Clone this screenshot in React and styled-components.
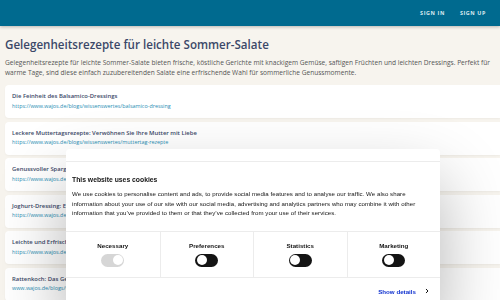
import React from 'react';
import styled, { createGlobalStyle } from 'styled-components';

const GlobalStyle = createGlobalStyle`
  html, body {
    margin: 0;
    padding: 0;
    height: 100%;
    overflow: hidden;
    background: #f7f4ee;
    font-family: "Open Sans", "Noto Sans", sans-serif;
  }
`;

const TopBar = styled.header`
  height: 26px;
  background: #006a8f;
  box-shadow: 0 1px 3px rgba(0, 0, 0, 0.25);
  display: flex;
  align-items: center;
  justify-content: flex-end;
  gap: 15px;
  padding-right: 14px;
`;

const NavLink = styled.a`
  font-size: 5.4px;
  font-weight: 700;
  letter-spacing: 0.6px;
  color: #d9e9f0;
  text-transform: uppercase;
  text-decoration: none;
`;

const Main = styled.main`
  padding: 11px 0 0 5px;
`;

const Title = styled.h1`
  margin: 0;
  font-size: 11.6px;
  line-height: 16px;
  font-weight: 600;
  color: #3b4868;
`;

const Intro = styled.p`
  margin: 5px 2px 7px 0;
  font-size: 6.6px;
  line-height: 10px;
  color: #555;
`;

const List = styled.div`
  display: flex;
  flex-direction: column;
  gap: 3.5px;
`;

const Card = styled.div`
  background: #fff;
  border-radius: 4px 0 0 4px;
  padding: 7px 7px;
  box-shadow: 0 1px 2px rgba(0, 0, 0, 0.04);
`;

const CardTitle = styled.div`
  font-size: 5.9px;
  line-height: 9.5px;
  font-weight: 600;
  color: #3b4868;
  white-space: nowrap;
`;

const CardUrl = styled.div`
  font-size: 5.4px;
  line-height: 9.5px;
  color: #2a8db3;
  white-space: nowrap;
`;

const Dialog = styled.div`
  position: fixed;
  left: 66px;
  top: 149px;
  width: 374px;
  background: #fff;
  border-radius: 4px;
  box-shadow: 0 32px 68px rgba(0, 0, 0, 0.3);
  font-family: "Liberation Sans", Arial, sans-serif;
  color: #141414;
`;

const DialogHead = styled.div`
  height: 12px;
  border-bottom: 1px solid #ececec;
`;

const DialogBody = styled.div`
  padding: 13px 14px 13px 6px;
`;

const DialogTitle = styled.h2`
  margin: 0 0 4px;
  font-size: 6.8px;
  line-height: 10px;
  font-weight: 700;
`;

const DialogText = styled.p`
  margin: 0;
  font-size: 6.1px;
  line-height: 9.6px;
  letter-spacing: 0.05px;
`;

const Toggles = styled.div`
  display: grid;
  grid-template-columns: repeat(4, 1fr);
  border-top: 1px solid #ececec;
  border-bottom: 1px solid #ececec;
`;

const ToggleCell = styled.div`
  height: 45px;
  display: flex;
  flex-direction: column;
  align-items: center;
  justify-content: center;
  gap: 5px;
  border-left: ${(p) => (p.$first ? 'none' : '1px solid #ececec')};
`;

const ToggleLabel = styled.span`
  font-size: 6.2px;
  font-weight: 700;
`;

const Switch = styled.span`
  position: relative;
  width: 23px;
  height: 13px;
  border-radius: 7px;
  background: ${(p) => (p.$disabled ? '#d6d6d6' : '#141414')};
  &::after {
    content: '';
    position: absolute;
    top: 1.5px;
    left: ${(p) => (p.$on ? '11.5px' : '1.5px')};
    width: 10px;
    height: 10px;
    border-radius: 50%;
    background: #fff;
  }
`;

const Footer = styled.div`
  display: flex;
  justify-content: flex-end;
  align-items: center;
  gap: 8px;
  padding: 10px 10px 14px;
`;

const DetailsLink = styled.a`
  font-size: 6.2px;
  font-weight: 700;
  color: #1032cf;
  text-decoration: none;
`;

const Chevron = () => (
  <svg width="6" height="6" viewBox="0 0 24 24" fill="none" stroke="#141414" strokeWidth="4" strokeLinecap="round" strokeLinejoin="round">
    <path d="M9 5l7 7-7 7" />
  </svg>
);

const posts = [
  ['Die Feinheit des Balsamico-Dressings', 'https://www.wajos.de/blogs/wissenswertes/balsamico-dressing'],
  ['Leckere Muttertagsrezepte: Verwöhnen Sie Ihre Mutter mit Liebe', 'https://www.wajos.de/blogs/wissenswertes/muttertag-rezepte'],
  ['Genussvoller Spargelsalat mit Erdbeeren und Balsamico', 'https://www.wajos.de/blogs/wissenswertes/spargelsalat'],
  ['Joghurt-Dressing: Ein cremischer Klassiker für Salate', 'https://www.wajos.de/blogs/wissenswertes/joghurt-dressing'],
  ['Leichte und Erfrischende Sommerrezepte', 'https://www.wajos.de/blogs/wissenswertes/sommerrezepte'],
  ['Rattenkoch: Das Geheimnis der französischen Küche', 'www.wajos.de/blogs/wissenswertes/ratatouille'],
];

const consents = [
  { label: 'Necessary', disabled: true, on: true },
  { label: 'Preferences' },
  { label: 'Statistics' },
  { label: 'Marketing' },
];

export default function App() {
  return (
    <>
      <GlobalStyle />
      <TopBar>
        <NavLink>Sign in</NavLink>
        <NavLink>Sign up</NavLink>
      </TopBar>
      <Main>
        <Title>Gelegenheitsrezepte für leichte Sommer-Salate</Title>
        <Intro>
          Gelegenheitsrezepte für leichte Sommer-Salate bieten frische, köstliche Gerichte mit knackigem Gemüse, saftigen
          Früchten und leichten Dressings. Perfekt für warme Tage, sind diese einfach zuzubereitenden Salate eine
          erfrischende Wahl für sommerliche Genussmomente.
        </Intro>
        <List>
          {posts.map(([title, url]) => (
            <Card key={url}>
              <CardTitle>{title}</CardTitle>
              <CardUrl>{url}</CardUrl>
            </Card>
          ))}
        </List>
      </Main>
      <Dialog>
        <DialogHead />
        <DialogBody>
          <DialogTitle>This website uses cookies</DialogTitle>
          <DialogText>
            We use cookies to personalise content and ads, to provide social media features and to analyse our traffic. We
            also share information about your use of our site with our social media, advertising and analytics partners who
            may combine it with other information that you’ve provided to them or that they’ve collected from your use of
            their services.
          </DialogText>
        </DialogBody>
        <Toggles>
          {consents.map((c, i) => (
            <ToggleCell key={c.label} $first={i === 0}>
              <ToggleLabel>{c.label}</ToggleLabel>
              <Switch $disabled={c.disabled} $on={c.on} />
            </ToggleCell>
          ))}
        </Toggles>
        <Footer>
          <DetailsLink>Show details</DetailsLink>
          <Chevron />
        </Footer>
      </Dialog>
    </>
  );
}
